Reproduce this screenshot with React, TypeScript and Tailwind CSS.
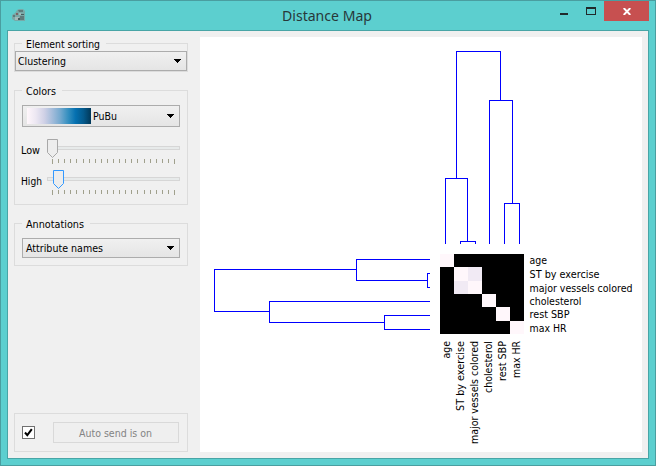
import type { ReactNode } from 'react';

function Label({ text, width, className = '' }: { text: string; width: number; className?: string }) {
  return (
    <svg width={width + 1} height="14" className={`shrink-0 overflow-visible ${className}`}>
      <text x="0" y="11" textLength={width} lengthAdjust="spacingAndGlyphs" fill="currentColor">{text}</text>
    </svg>
  );
}

function Group({ title, titleWidth, className, children }: { title?: string; titleWidth?: number; className: string; children: ReactNode }) {
  return (
    <section className={`relative shrink-0 border border-[#dcdcdc] ${className}`}>
      {title && (
        <div className="absolute -top-[7px] left-[7px] bg-[#f0f0f0] pr-[5px] pl-[4px]">
          <Label text={title} width={titleWidth ?? 0} className="block" />
        </div>
      )}
      {children}
    </section>
  );
}

function Combo({ className, children }: { className: string; children: ReactNode }) {
  return (
    <div className={`flex items-center border border-[#acacac] bg-linear-to-b from-[#f0f0f0] to-[#e5e5e5] ${className}`}>
      {children}
      <svg width="7" height="4" className="mr-[5px] ml-auto" shapeRendering="crispEdges">
        <path d="M0 0h7v1H6v1H5v1H4v1H3V3H2V2H1V1H0z" fill="#000" />
      </svg>
    </div>
  );
}

function SliderRow({ name, width, at, color }: { name: string; width: number; at: number; color: string }) {
  const ticks = Array.from({ length: 21 }, (_, i) => i);
  return (
    <div className="flex h-[31px]">
      <Label text={name} width={width} className="mt-[4px]" />
      <svg width="134" height="28" className="ml-auto" shapeRendering="crispEdges">
        <rect x="0.5" y="7.5" width="132" height="3" fill="#e7eaea" stroke="#d6d6d6" />
        {ticks.map((i) => (
          <rect key={i} x={5 + Math.round(i * 6.1)} y="20" width="1" height={i === 0 || i === 20 ? 5 : 4} fill="#a0a08c" />
        ))}
        <path transform={`translate(${at} 0)`} d="M.5.5h10v13l-5 5-5-5z" fill="#ededed" stroke={color} shapeRendering="auto" />
      </svg>
    </div>
  );
}

const labels = [
  { text: 'age', width: 17.5, y: 264, x: 450 },
  { text: 'ST by exercise', width: 70, y: 278, x: 464 },
  { text: 'major vessels colored', width: 103, y: 292, x: 478 },
  { text: 'cholesterol', width: 52, y: 305, x: 492 },
  { text: 'rest SBP', width: 40, y: 318, x: 506 },
  { text: 'max HR', width: 37, y: 332, x: 520 },
];

const rows = [254, 267, 281, 294, 307, 321, 334];

function DistanceChart() {
  return (
    <svg width="442" height="415" viewBox="200 37 442 415" className="shrink-0 bg-white">
      <g fill="none" stroke="#0000ff" shapeRendering="crispEdges">
        <path d="M456.5 178V51.5H500.5V100M489.5 244V100.5H512.5V203M504.5 244V203.5H519.5V244M445.5 244V178.5H467.5V241M460.5 244V241.5H475.5V244" />
        <path d="M356 269.5H214.5V311.5H269M430 259.5H356.5V280.5H427M430 273.5H427.5V287.5H430M430 301.5H269.5V322.5H384M430 315.5H384.5V329.5H430" />
      </g>
      <g shapeRendering="crispEdges">
        <rect x="440" y="254" width="84" height="80" fill="#000" />
        {labels.map((l, i) => (
          <rect key={l.text} x={440 + i * 14} y={rows[i]} width="14" height={rows[i + 1] - rows[i]} fill="#fff7fb" />
        ))}
        <rect x="468" y="267" width="14" height="14" fill="#f1eaf4" />
        <rect x="454" y="281" width="14" height="13" fill="#f1eaf4" />
      </g>
      <g fill="#000">
        {labels.map((l) => (
          <text key={l.text} x="529.5" y={l.y} textLength={l.width} lengthAdjust="spacingAndGlyphs">{l.text}</text>
        ))}
        {labels.map((l) => (
          <text key={l.text} transform={`translate(${l.x} ${341 + l.width}) rotate(-90)`} textLength={l.width} lengthAdjust="spacingAndGlyphs">{l.text}</text>
        ))}
      </g>
    </svg>
  );
}

export default function App() {
  return (
    <div className="flex h-[466px] w-[656px] flex-col border border-[#4a9ea0] bg-[#5ccfcf] px-[6px] pb-[6px] font-['DejaVu_Sans_Condensed','DejaVu_Sans',sans-serif] text-[11px] leading-[14px] text-black">
      <header className="flex h-[29px] shrink-0">
        <svg width="13" height="13" className="mt-[8px] ml-[5px]">
          <path d="M5 1l2-1h4l2 2v10H3L0 10V6l3-2z" fill="#78a9a8" />
          <path d="M6 1h5v2H7zM1 6h2v2H1zM8 7h4v4H8z" fill="#5f7a7b" />
          <path d="M3 8h4v3H3zM7 4h2v2H7z" fill="#a4b9b8" />
          <path d="M4 4h2v2H4z" fill="#7d6263" />
          <path d="M9 5h3v1H9zM6 9h2v2H6z" fill="#465c5e" />
        </svg>
        <svg width="92" height="22" className="mt-[4px] ml-[257px] overflow-visible font-['Noto_Sans',sans-serif] text-[15px]">
          <text x="0" y="16" textLength="90" lengthAdjust="spacingAndGlyphs" fill="#28383a">Distance Map</text>
        </svg>
        <div className="ml-auto flex">
          <svg width="45" height="20" shapeRendering="crispEdges" className="mr-[7px]">
            <path d="M8 12h8v2H8z" fill="#202a2b" />
            <path d="M34 6h10v8H34zM35 8v5h8V8z" fillRule="evenodd" fill="#202a2b" />
          </svg>
          <div className="flex h-[20px] w-[45px] justify-center bg-[#c75050]">
            <svg width="8" height="7" className="mt-[7px]">
              <path d="M.7 0l6.6 7M7.3 0L.7 7" stroke="#fff" strokeWidth="1.9" />
            </svg>
          </div>
        </div>
      </header>
      <main className="flex min-h-0 flex-1 justify-between border border-[#48a5a6] bg-[#f0f0f0] px-[6px] pb-[6px]">
        <aside className="flex w-[174px] flex-col pt-[12px]">
          <Group title="Element sorting" titleWidth={74} className="h-[29px] pt-[7px]">
            <Combo className="h-[20px] pl-[2px]">
              <Label text="Clustering" width={48} />
            </Combo>
          </Group>
          <Group title="Colors" titleWidth={30} className="mt-[18px] h-[115px] px-[7px] pt-[14px]">
            <Combo className="h-[22px] pl-[4px]">
              <div className="mr-[2px] h-[16px] w-[64px] bg-[linear-gradient(90deg,#fff7fb,#ece7f2_14%,#d0d1e6_27%,#a6bddb_39%,#74a9cf_52%,#3690c0_64%,#0570b0_76%,#045a8d_88%,#023858)]" />
              <Label text="PuBu" width={24} />
            </Combo>
            <div className="-mx-px pt-[12px]">
              <SliderRow name="Low" width={19} at={0} color="#a8a8a8" />
              <SliderRow name="High" width={21} at={6} color="#3399ff" />
            </div>
          </Group>
          <Group title="Annotations" titleWidth={58} className="mt-[18px] h-[43px] px-[7px] pt-[14px]">
            <Combo className="h-[20px] pl-[3px]">
              <Label text="Attribute names" width={77} />
            </Combo>
          </Group>
          <Group className="mt-auto flex h-[39px] items-center pr-[8px] pl-[7px]">
            <svg width="13" height="13" className="mb-px">
              <rect x=".5" y=".5" width="12" height="12" fill="#fff" stroke="#707070" />
              <path d="M3 6.5l2.3 2.7L9.8 3.2" fill="none" stroke="#000" strokeWidth="2" />
            </svg>
            <div className="ml-auto flex h-[21px] w-[126px] items-center justify-center border border-[#d9d9d9] bg-[#efefef] text-[#838383]">
              <Label text="Auto send is on" width={73} />
            </div>
          </Group>
        </aside>
        <div className="flex pt-[6px]">
          <DistanceChart />
        </div>
      </main>
    </div>
  );
}
